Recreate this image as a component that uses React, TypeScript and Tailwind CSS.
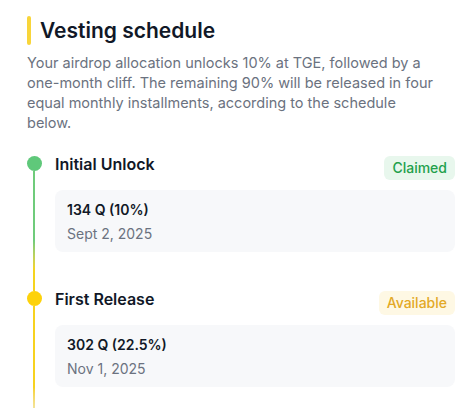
import React from 'react';

type Step = {
  title: string;
  amount: string;
  date: string;
  status: 'claimed' | 'available';
};

const steps: Step[] = [
  { title: 'Initial Unlock', amount: '134 Q (10%)', date: 'Sept 2, 2025', status: 'claimed' },
  { title: 'First Release', amount: '302 Q (22.5%)', date: 'Nov 1, 2025', status: 'available' },
];

const App: React.FC = () => {
  return (
    <div
      className="min-h-screen w-full bg-white pl-[27px] pr-[19px] pt-[16px]"
      style={{ fontFamily: 'Inter, "Noto Sans", sans-serif' }}
    >
      <div className="flex items-center">
        <div className="h-[29px] w-[4px] rounded-sm bg-[#f8d53a]" />
        <h1 className="ml-[9px] text-[21px] font-semibold leading-[28px] text-[#111827]">
          Vesting schedule
        </h1>
      </div>
      <p className="mt-[8px] max-w-[412px] text-[14.5px] leading-[20px] text-[#6b7280]">
        Your airdrop allocation unlocks 10% at TGE, followed by a one-month cliff. The remaining 90%
        will be released in four equal monthly installments, according to the schedule below.
      </p>

      <div className="mt-[19px]">
        {steps.map((step, i) => {
          const claimed = step.status === 'claimed';
          return (
            <div key={step.title} className="flex">
              <div className="flex w-[14px] flex-col items-center">
                <div className={i === 0 ? 'h-[4px]' : 'h-[4px] w-[2px] bg-[#f7d21f]'} />
                <div
                  className={
                    claimed
                      ? 'h-[15px] w-[15px] shrink-0 rounded-full bg-[#5fc87a]'
                      : 'h-[15px] w-[15px] shrink-0 rounded-full bg-[#fdd20b]'
                  }
                />
                <div
                  className={
                    claimed
                      ? 'w-[2px] flex-1 bg-gradient-to-b from-[#6fcb7b] from-60% to-[#f5d41e] to-85%'
                      : 'w-[2px] flex-1 bg-gradient-to-b from-[#f7d21f] from-70% to-[#f1eed0]'
                  }
                />
              </div>
              <div className="ml-[14px] flex-1 pb-[35px]">
                <div className="flex items-start justify-between">
                  <div className="text-[16px] font-semibold leading-[24px] text-[#111827]">
                    {step.title}
                  </div>
                  <div
                    className={
                      claimed
                        ? 'mt-[4px] rounded-md bg-[#e8f7ed] px-[8px] text-[14px] font-medium leading-[24px] text-[#22a04b]'
                        : 'mt-[4px] rounded-md bg-[#fef8e4] px-[8px] text-[14px] font-medium leading-[24px] text-[#e3a926]'
                    }
                  >
                    {claimed ? 'Claimed' : 'Available'}
                  </div>
                </div>
                <div className="mt-[10px] rounded-lg bg-[#f7f8fa] px-[12px] pb-[8px] pt-[10px]">
                  <div className="text-[14px] font-semibold leading-[20px] text-[#111827]">
                    {step.amount}
                  </div>
                  <div className="mt-[4px] text-[14px] leading-[20px] text-[#6b7280]">{step.date}</div>
                </div>
              </div>
            </div>
          );
        })}
      </div>
    </div>
  );
};

export default App;
